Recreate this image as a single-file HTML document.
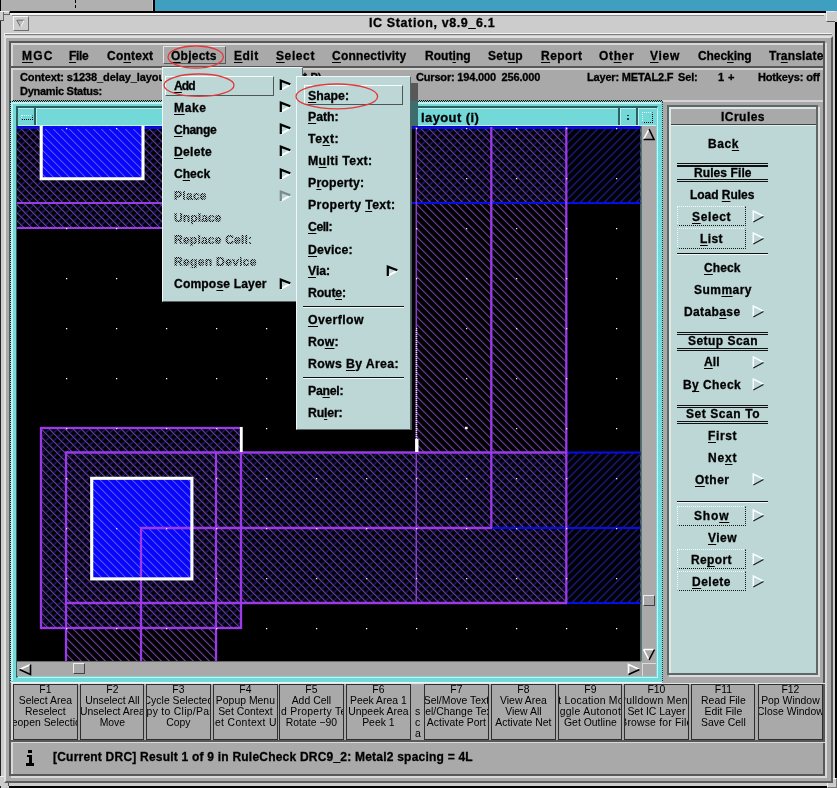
<!DOCTYPE html>
<html><head><meta charset="utf-8"><title>IC Station</title><style>
html,body{margin:0;padding:0;overflow:hidden}
html{width:837px;height:788px}
body{width:837px;height:788px;position:relative;overflow:hidden;background:#cccccc;font-family:"Liberation Sans",sans-serif;}
body div, body span.t{position:absolute;}
span.t{white-space:pre;line-height:1;display:block;will-change:transform}
span.t u{text-decoration:underline;text-underline-offset:1.5px;text-decoration-thickness:1px}
div.fkw{position:absolute;left:-40px;right:-40px;top:-1.6px;text-align:center;will-change:transform}
div.fk{position:static;font-size:10.4px;line-height:11.05px;white-space:pre;letter-spacing:0.02px;color:#000}
</style></head>
<body>
<div style="left:0px;top:0px;width:837px;height:11px;background:#3f9fc1;"></div>
<div style="left:0px;top:0px;width:152px;height:10.5px;background:#b0b0b0;"></div>
<div style="left:152px;top:0px;width:1.2px;height:10.5px;background:#c8c8c8;"></div>
<div style="left:153.2px;top:0px;width:1.8px;height:11px;background:#000;"></div>
<div style="left:0px;top:0px;width:1px;height:11px;background:#000;"></div>
<div style="left:75px;top:0px;width:1.3px;height:2.5px;background:#000;"></div>
<div style="left:75px;top:5px;width:1.3px;height:3px;background:#000;"></div>
<div style="left:0px;top:11px;width:835px;height:775px;background:#cccccc;"></div>
<div style="left:0px;top:11px;width:1px;height:777px;background:#222;"></div>
<div style="left:9.5px;top:10.7px;width:817px;height:2.3px;background:#000;"></div>
<div style="left:10px;top:13px;width:815px;height:1.8px;background:#f4f4f4;"></div>
<div style="left:0px;top:11px;width:9.7px;height:3.6px;background:#cccccc;border-right:1px solid #555;border-bottom:1px solid #666;border-top:1px solid #f0f0f0;box-sizing:border-box;"></div>
<div style="left:0px;top:11px;width:3.6px;height:10.4px;background:#cccccc;border-right:1px solid #666;border-bottom:1px solid #555;box-sizing:border-box;"></div>
<div style="left:0px;top:11px;width:3.6px;height:1px;background:#f0f0f0;"></div>
<div style="left:12px;top:15px;width:812px;height:0.9px;background:#8c8c8c;"></div>
<div style="left:826px;top:11px;width:9px;height:10.5px;background:#cccccc;border-left:1px solid #eee;border-bottom:1px solid #555;border-top:1px solid #cfeefa;box-sizing:border-box;"></div>
<div style="left:835px;top:21.5px;width:2px;height:766.5px;background:#000;"></div>
<div style="left:9px;top:785.8px;width:828px;height:2.2px;background:#000;"></div>
<div style="left:826.5px;top:777.5px;width:10.5px;height:10.5px;background:#cccccc;border-left:1px solid #f4f4f4;border-top:1px solid #f4f4f4;border-right:1.5px solid #777;border-bottom:1.5px solid #777;box-sizing:border-box;"></div>
<div style="left:0px;top:776px;width:9px;height:10px;background:#cccccc;border-right:1px solid #555;border-top:1px solid #eee;box-sizing:border-box;"></div>
<div style="left:4px;top:33.3px;width:828px;height:1px;background:#f4f4f4;"></div>
<div style="left:5px;top:34.3px;width:827px;height:1px;background:#7c7c7c;"></div>
<div style="left:4px;top:33.3px;width:1px;height:750px;background:#f0f0f0;"></div>
<div style="left:12.9px;top:16px;width:15.8px;height:14.7px;background:#cccccc;box-sizing:border-box;border-top:1.2px solid #f6f6f6;border-left:1.2px solid #f6f6f6;border-bottom:1px solid #6e6e6e;border-right:1px solid #6e6e6e;"><svg width="14" height="13" style="position:absolute;left:0;top:0" viewBox="0 0 14 13"><path d="M2.8 3.2 L10.2 3.2 L6.4 9.6 Z" fill="#bcbcbc" stroke="#6a6a6a" stroke-width="1"/><path d="M10.2 3.4 L6.6 9.6" stroke="#f6f6f6" stroke-width="1.1"/></svg></div>
<span class="t" style="left:368.60px;top:16.77px;font-size:12.5px;font-weight:bold;color:#000;-webkit-text-stroke:0.3px #000;letter-spacing:0.614px;">IC Station, v8.9_6.1</span>
<div style="left:4px;top:35.8px;width:828.5px;height:747.7px;background:#a9a9a9;box-sizing:border-box;border-top:2.4px solid #e0e0e0;border-left:2px solid #e0e0e0;border-bottom:2.5px solid #5c5c5c;border-right:2.5px solid #5c5c5c;"></div>
<div style="left:11.1px;top:42.9px;width:816.1px;height:735.1px;box-sizing:border-box;border:2px solid #d8d8d8;"></div>
<div style="left:8.9px;top:40.7px;width:816.1px;height:735.1px;box-sizing:border-box;border:2.2px solid #585858;"></div>
<div style="left:13.2px;top:44.9px;width:809.5px;height:21.4px;background:#a9a9a9;"></div>
<div style="left:11.1px;top:66.3px;width:813.9px;height:2px;background:#585858;"></div>
<div style="left:163px;top:46.4px;width:62.7px;height:18px;background:#a9a9a9;box-sizing:border-box;border-top:1.5px solid #e4e4e4;border-left:1.5px solid #e4e4e4;border-bottom:1.5px solid #5a5a5a;border-right:1.5px solid #5a5a5a;"></div>
<span class="t" style="left:21.80px;top:50.42px;font-size:12px;font-weight:bold;color:#000;-webkit-text-stroke:0.3px #000;letter-spacing:1.150px;"><u>M</u>GC</span>
<span class="t" style="left:68.70px;top:50.42px;font-size:12px;font-weight:bold;color:#000;-webkit-text-stroke:0.3px #000;letter-spacing:-0.296px;"><u>F</u>ile</span>
<span class="t" style="left:107.10px;top:50.42px;font-size:12px;font-weight:bold;color:#000;-webkit-text-stroke:0.3px #000;letter-spacing:0.235px;">Co<u>n</u>text</span>
<span class="t" style="left:171.40px;top:50.42px;font-size:12px;font-weight:bold;color:#000;-webkit-text-stroke:0.3px #000;letter-spacing:0.245px;"><u>O</u>bjects</span>
<span class="t" style="left:234.20px;top:50.42px;font-size:12px;font-weight:bold;color:#000;-webkit-text-stroke:0.3px #000;letter-spacing:0.504px;"><u>E</u>dit</span>
<span class="t" style="left:275.70px;top:50.42px;font-size:12px;font-weight:bold;color:#000;-webkit-text-stroke:0.3px #000;letter-spacing:0.605px;"><u>S</u>elect</span>
<span class="t" style="left:332.20px;top:50.42px;font-size:12px;font-weight:bold;color:#000;-webkit-text-stroke:0.3px #000;letter-spacing:0.197px;"><u>C</u>onnectivity</span>
<span class="t" style="left:424.70px;top:50.42px;font-size:12px;font-weight:bold;color:#000;-webkit-text-stroke:0.3px #000;letter-spacing:0.043px;">Rout<u>i</u>ng</span>
<span class="t" style="left:488.00px;top:50.42px;font-size:12px;font-weight:bold;color:#000;-webkit-text-stroke:0.3px #000;letter-spacing:0.331px;">Set<u>u</u>p</span>
<span class="t" style="left:540.60px;top:50.42px;font-size:12px;font-weight:bold;color:#000;-webkit-text-stroke:0.3px #000;letter-spacing:0.446px;"><u>R</u>eport</span>
<span class="t" style="left:598.90px;top:50.42px;font-size:12px;font-weight:bold;color:#000;-webkit-text-stroke:0.3px #000;letter-spacing:0.642px;">Ot<u>h</u>er</span>
<span class="t" style="left:650.20px;top:50.42px;font-size:12px;font-weight:bold;color:#000;-webkit-text-stroke:0.3px #000;letter-spacing:0.720px;"><u>V</u>iew</span>
<span class="t" style="left:697.80px;top:50.42px;font-size:12px;font-weight:bold;color:#000;-webkit-text-stroke:0.3px #000;letter-spacing:-0.076px;">Chec<u>k</u>ing</span>
<span class="t" style="left:769.20px;top:50.42px;font-size:12px;font-weight:bold;color:#000;-webkit-text-stroke:0.3px #000;letter-spacing:0.210px;">Tr<u>a</u>nslate</span>
<div style="left:13.2px;top:68.3px;width:809.5px;height:32px;background:#a9a9a9;"></div>
<div style="left:13.2px;top:68.3px;width:809.5px;height:1.3px;background:#d2d2d2;"></div>
<span class="t" style="left:20.00px;top:71.51px;font-size:11px;font-weight:bold;color:#000;-webkit-text-stroke:0.3px #000;letter-spacing:-0.089px;">Context: s1238_delay_layout</span>
<span class="t" style="left:20.00px;top:86.21px;font-size:11px;font-weight:bold;color:#000;-webkit-text-stroke:0.3px #000;letter-spacing:-0.286px;">Dynamic Status:</span>
<span class="t" style="left:299.20px;top:71.51px;font-size:11px;font-weight:bold;color:#000;-webkit-text-stroke:0.3px #000;letter-spacing:0.125px;">(* P)</span>
<span class="t" style="left:416.20px;top:71.61px;font-size:11px;font-weight:bold;color:#000;-webkit-text-stroke:0.3px #000;letter-spacing:-0.179px;">Cursor: 194.000  256.000</span>
<span class="t" style="left:587.20px;top:71.61px;font-size:11px;font-weight:bold;color:#000;-webkit-text-stroke:0.3px #000;letter-spacing:-0.181px;">Layer: METAL2.F</span>
<span class="t" style="left:678.00px;top:71.61px;font-size:11px;font-weight:bold;color:#000;-webkit-text-stroke:0.3px #000;letter-spacing:-0.162px;">Sel:</span>
<span class="t" style="left:718.20px;top:71.61px;font-size:11px;font-weight:bold;color:#000;-webkit-text-stroke:0.3px #000;letter-spacing:0.445px;">1 +</span>
<span class="t" style="left:758.20px;top:71.61px;font-size:11px;font-weight:bold;color:#000;-webkit-text-stroke:0.3px #000;letter-spacing:-0.151px;">Hotkeys: off</span>
<div style="left:13.2px;top:100px;width:649px;height:1px;border-top:1px dotted #000;"></div>
<div style="left:662px;top:100px;width:160.7px;height:2px;background:#d4d4d4;"></div>
<div style="left:9.5px;top:100.5px;width:653px;height:582px;background:#72d8d8;box-sizing:border-box;border-top:1.5px dotted #222;border-left:1.5px dotted #222;border-right:1.5px dotted #333;border-bottom:1.5px solid #e8f8f8;"></div>
<div style="left:11px;top:102px;width:650px;height:1.6px;background:#c4f0f0;"></div>
<div style="left:11px;top:102px;width:1.8px;height:579px;background:#c4f0f0;"></div>
<div style="left:15.5px;top:106px;width:642.5px;height:571.5px;background:#72d8d8;box-sizing:border-box;border-top:2px solid #2f6060;border-left:2px solid #2f6060;border-bottom:1.5px solid #c8f2f2;border-right:1.5px solid #c8f2f2;"></div>
<div style="left:17.5px;top:108px;width:638px;height:1.3px;background:#b8eeee;"></div>
<div style="left:34.4px;top:108px;width:1.6px;height:17px;background:#2f6060;"></div>
<div style="left:36px;top:109px;width:1.2px;height:16px;background:#b8eeee;"></div>
<div style="left:618px;top:108px;width:1.6px;height:17px;background:#2f6060;"></div>
<div style="left:619.6px;top:109px;width:1.2px;height:16px;background:#b8eeee;"></div>
<div style="left:636.3px;top:108px;width:1.6px;height:17px;background:#2f6060;"></div>
<div style="left:637.9px;top:109px;width:1.2px;height:16px;background:#b8eeee;"></div>
<div style="left:17.5px;top:124.7px;width:638px;height:1.3px;background:#c4f0f0;"></div>
<div style="left:21px;top:115px;width:11.5px;height:5px;box-sizing:border-box;border-top:1px dotted #f4ffff;border-left:1px dotted #f4ffff;border-bottom:1px dotted #000;border-right:1px dotted #000;"></div>
<div style="left:627px;top:114.6px;width:1.5px;height:1.5px;background:#1a3a3a;"></div>
<div style="left:627px;top:118.2px;width:1.5px;height:1.5px;background:#1a3a3a;"></div>
<div style="left:641.5px;top:112px;width:11.5px;height:10.5px;box-sizing:border-box;border-top:1.5px dotted #f4ffff;border-left:1.5px dotted #f4ffff;border-bottom:1.5px dotted #000;border-right:1.5px dotted #000;"></div>
<span class="t" style="left:420.90px;top:110.63px;font-size:13px;font-weight:bold;color:#000;-webkit-text-stroke:0.3px #000;letter-spacing:0.403px;">layout (i)</span>
<div style="left:640.5px;top:126px;width:15px;height:550px;background:#a9a9a9;"></div>
<div style="left:17px;top:661px;width:638.5px;height:15px;background:#a9a9a9;"></div>
<div style="left:640.5px;top:126px;width:1.3px;height:535px;background:#6a6a6a;"></div>
<div style="left:17px;top:661px;width:623.5px;height:1.3px;background:#6a6a6a;"></div>
<svg width="623.5" height="535" viewBox="17 126 623.5 535" style="position:absolute;left:17px;top:126px;display:block" shape-rendering="auto"><defs><pattern id="hp" x="4.3" y="0" width="8" height="8" patternUnits="userSpaceOnUse"><path d="M-2 -2 L10 10 M-2 6 L2 10 M6 -2 L10 2" stroke="#1a0a2c" stroke-width="2" fill="none"/><path d="M-2 -2 L10 10 M-2 6 L2 10 M6 -2 L10 2" stroke="#9868d0" stroke-width="0.8" fill="none"/></pattern><pattern id="hb" x="6.6" y="0" width="8" height="8" patternUnits="userSpaceOnUse"><path d="M-2 10 L10 -2 M-2 2 L2 -2 M6 10 L10 6" stroke="#07072c" stroke-width="2.4" fill="none"/><path d="M-2 10 L10 -2 M-2 2 L2 -2 M6 10 L10 6" stroke="#2828b4" stroke-width="0.85" fill="none"/></pattern><pattern id="hl" x="4.3" y="0" width="8" height="8" patternUnits="userSpaceOnUse"><path d="M-1 -1 L9 9 M-1 7 L1 9 M7 -1 L9 1" stroke="#8670ff" stroke-width="0.95" fill="none"/></pattern></defs><rect x="17" y="126" width="623.5" height="535" fill="#000"/><rect x="17" y="127" width="283" height="101" fill="url(#hb)"/><rect x="416" y="127" width="224.5" height="76" fill="url(#hb)"/><rect x="41" y="428" width="200" height="200" fill="url(#hb)"/><rect x="66" y="452" width="574.5" height="151" fill="url(#hb)"/><rect x="41" y="126" width="102" height="53" fill="#0808f8"/><rect x="91" y="478" width="101" height="101" fill="#0808f8"/><rect x="41" y="126" width="102" height="53" fill="url(#hl)"/><rect x="91" y="478" width="101" height="101" fill="url(#hl)"/><rect x="17" y="127" width="283" height="101" fill="url(#hp)"/><rect x="416" y="127" width="150" height="325" fill="url(#hp)"/><rect x="41" y="428" width="200" height="200" fill="url(#hp)"/><rect x="66" y="452" width="500" height="151" fill="url(#hp)"/><rect x="66" y="603" width="150" height="58" fill="url(#hp)"/><rect x="42" y="126" width="100" height="52" fill="#0808f8"/><rect x="92" y="479" width="99" height="99" fill="#0808f8"/><rect x="42" y="126" width="100" height="52" fill="url(#hl)"/><rect x="92" y="479" width="99" height="99" fill="url(#hl)"/><line x1="17" y1="127.6" x2="640.5" y2="127.6" stroke="#0a0af0" stroke-width="2.8"/><line x1="411" y1="203" x2="640.5" y2="203" stroke="#0a0af0" stroke-width="2"/><line x1="566" y1="452.5" x2="640.5" y2="452.5" stroke="#0a0af0" stroke-width="2"/><line x1="491" y1="528" x2="640.5" y2="528" stroke="#0a0af0" stroke-width="2"/><line x1="566" y1="603" x2="640.5" y2="603" stroke="#0a0af0" stroke-width="2"/><line x1="17" y1="203" x2="300" y2="203" stroke="#9c3aea" stroke-width="2.2"/><line x1="17" y1="228" x2="300" y2="228" stroke="#9c3aea" stroke-width="2.2"/><line x1="416.3" y1="127" x2="416.3" y2="603" stroke="#8a3cd0" stroke-width="1.5"/><line x1="491.3" y1="127" x2="491.3" y2="528" stroke="#9c3aea" stroke-width="2.3"/><line x1="566.3" y1="127" x2="566.3" y2="603" stroke="#9c3aea" stroke-width="2.3"/><rect x="41" y="428" width="200" height="200" fill="none" stroke="#9c3aea" stroke-width="2.3"/><line x1="66" y1="452" x2="66" y2="661" stroke="#9c3aea" stroke-width="2.3"/><line x1="65" y1="452.5" x2="567" y2="452.5" stroke="#9c3aea" stroke-width="2.3"/><line x1="65" y1="603" x2="567" y2="603" stroke="#9c3aea" stroke-width="2.3"/><line x1="216" y1="452" x2="216" y2="661" stroke="#9c3aea" stroke-width="2.3"/><line x1="141" y1="528" x2="141" y2="661" stroke="#9c3aea" stroke-width="2.3"/><line x1="140" y1="528" x2="492" y2="528" stroke="#9c3aea" stroke-width="2.3"/><path d="M41.2 126 V178.7 H143 V126" fill="none" stroke="#fff" stroke-width="3.1"/><rect x="91.7" y="478.3" width="100.2" height="100.6" fill="none" stroke="#fff" stroke-width="3.1"/><line x1="241.3" y1="427" x2="241.3" y2="452" stroke="#fff" stroke-width="2.8"/><line x1="416.8" y1="439" x2="416.8" y2="452" stroke="#fff" stroke-width="3.4"/><line x1="416.5" y1="330" x2="416.5" y2="439" stroke="#e8e0f8" stroke-width="1.6" stroke-dasharray="1 1"/><rect x="66" y="128" width="1.25" height="1.25" fill="#fff"/><rect x="66" y="178" width="1.25" height="1.25" fill="#fff"/><rect x="66" y="228" width="1.25" height="1.25" fill="#fff"/><rect x="66" y="278" width="1.25" height="1.25" fill="#fff"/><rect x="66" y="328" width="1.25" height="1.25" fill="#fff"/><rect x="66" y="378" width="1.25" height="1.25" fill="#fff"/><rect x="66" y="428" width="1.25" height="1.25" fill="#fff"/><rect x="66" y="478" width="1.25" height="1.25" fill="#fff"/><rect x="66" y="528" width="1.25" height="1.25" fill="#fff"/><rect x="66" y="578" width="1.25" height="1.25" fill="#fff"/><rect x="66" y="628" width="1.25" height="1.25" fill="#fff"/><rect x="116" y="128" width="1.25" height="1.25" fill="#fff"/><rect x="116" y="178" width="1.25" height="1.25" fill="#fff"/><rect x="116" y="228" width="1.25" height="1.25" fill="#fff"/><rect x="116" y="278" width="1.25" height="1.25" fill="#fff"/><rect x="116" y="328" width="1.25" height="1.25" fill="#fff"/><rect x="116" y="378" width="1.25" height="1.25" fill="#fff"/><rect x="116" y="428" width="1.25" height="1.25" fill="#fff"/><rect x="116" y="478" width="1.25" height="1.25" fill="#fff"/><rect x="116" y="528" width="1.25" height="1.25" fill="#fff"/><rect x="116" y="578" width="1.25" height="1.25" fill="#fff"/><rect x="116" y="628" width="1.25" height="1.25" fill="#fff"/><rect x="166" y="128" width="1.25" height="1.25" fill="#fff"/><rect x="166" y="178" width="1.25" height="1.25" fill="#fff"/><rect x="166" y="228" width="1.25" height="1.25" fill="#fff"/><rect x="166" y="278" width="1.25" height="1.25" fill="#fff"/><rect x="166" y="328" width="1.25" height="1.25" fill="#fff"/><rect x="166" y="378" width="1.25" height="1.25" fill="#fff"/><rect x="166" y="428" width="1.25" height="1.25" fill="#fff"/><rect x="166" y="478" width="1.25" height="1.25" fill="#fff"/><rect x="166" y="528" width="1.25" height="1.25" fill="#fff"/><rect x="166" y="578" width="1.25" height="1.25" fill="#fff"/><rect x="166" y="628" width="1.25" height="1.25" fill="#fff"/><rect x="216" y="128" width="1.25" height="1.25" fill="#fff"/><rect x="216" y="178" width="1.25" height="1.25" fill="#fff"/><rect x="216" y="228" width="1.25" height="1.25" fill="#fff"/><rect x="216" y="278" width="1.25" height="1.25" fill="#fff"/><rect x="216" y="328" width="1.25" height="1.25" fill="#fff"/><rect x="216" y="378" width="1.25" height="1.25" fill="#fff"/><rect x="216" y="428" width="1.25" height="1.25" fill="#fff"/><rect x="216" y="478" width="1.25" height="1.25" fill="#fff"/><rect x="216" y="528" width="1.25" height="1.25" fill="#fff"/><rect x="216" y="578" width="1.25" height="1.25" fill="#fff"/><rect x="216" y="628" width="1.25" height="1.25" fill="#fff"/><rect x="266" y="128" width="1.25" height="1.25" fill="#fff"/><rect x="266" y="178" width="1.25" height="1.25" fill="#fff"/><rect x="266" y="228" width="1.25" height="1.25" fill="#fff"/><rect x="266" y="278" width="1.25" height="1.25" fill="#fff"/><rect x="266" y="328" width="1.25" height="1.25" fill="#fff"/><rect x="266" y="378" width="1.25" height="1.25" fill="#fff"/><rect x="266" y="428" width="1.25" height="1.25" fill="#fff"/><rect x="266" y="478" width="1.25" height="1.25" fill="#fff"/><rect x="266" y="528" width="1.25" height="1.25" fill="#fff"/><rect x="266" y="578" width="1.25" height="1.25" fill="#fff"/><rect x="266" y="628" width="1.25" height="1.25" fill="#fff"/><rect x="316" y="128" width="1.25" height="1.25" fill="#fff"/><rect x="316" y="178" width="1.25" height="1.25" fill="#fff"/><rect x="316" y="228" width="1.25" height="1.25" fill="#fff"/><rect x="316" y="278" width="1.25" height="1.25" fill="#fff"/><rect x="316" y="328" width="1.25" height="1.25" fill="#fff"/><rect x="316" y="378" width="1.25" height="1.25" fill="#fff"/><rect x="316" y="428" width="1.25" height="1.25" fill="#fff"/><rect x="316" y="478" width="1.25" height="1.25" fill="#fff"/><rect x="316" y="528" width="1.25" height="1.25" fill="#fff"/><rect x="316" y="578" width="1.25" height="1.25" fill="#fff"/><rect x="316" y="628" width="1.25" height="1.25" fill="#fff"/><rect x="366" y="128" width="1.25" height="1.25" fill="#fff"/><rect x="366" y="178" width="1.25" height="1.25" fill="#fff"/><rect x="366" y="228" width="1.25" height="1.25" fill="#fff"/><rect x="366" y="278" width="1.25" height="1.25" fill="#fff"/><rect x="366" y="328" width="1.25" height="1.25" fill="#fff"/><rect x="366" y="378" width="1.25" height="1.25" fill="#fff"/><rect x="366" y="428" width="1.25" height="1.25" fill="#fff"/><rect x="366" y="478" width="1.25" height="1.25" fill="#fff"/><rect x="366" y="528" width="1.25" height="1.25" fill="#fff"/><rect x="366" y="578" width="1.25" height="1.25" fill="#fff"/><rect x="366" y="628" width="1.25" height="1.25" fill="#fff"/><rect x="416" y="128" width="1.25" height="1.25" fill="#fff"/><rect x="416" y="178" width="1.25" height="1.25" fill="#fff"/><rect x="416" y="228" width="1.25" height="1.25" fill="#fff"/><rect x="416" y="278" width="1.25" height="1.25" fill="#fff"/><rect x="416" y="328" width="1.25" height="1.25" fill="#fff"/><rect x="416" y="378" width="1.25" height="1.25" fill="#fff"/><rect x="416" y="428" width="1.25" height="1.25" fill="#fff"/><rect x="416" y="478" width="1.25" height="1.25" fill="#fff"/><rect x="416" y="528" width="1.25" height="1.25" fill="#fff"/><rect x="416" y="578" width="1.25" height="1.25" fill="#fff"/><rect x="416" y="628" width="1.25" height="1.25" fill="#fff"/><rect x="466" y="128" width="1.25" height="1.25" fill="#fff"/><rect x="466" y="178" width="1.25" height="1.25" fill="#fff"/><rect x="466" y="228" width="1.25" height="1.25" fill="#fff"/><rect x="466" y="278" width="1.25" height="1.25" fill="#fff"/><rect x="466" y="328" width="1.25" height="1.25" fill="#fff"/><rect x="466" y="378" width="1.25" height="1.25" fill="#fff"/><rect x="466" y="428" width="1.25" height="1.25" fill="#fff"/><rect x="466" y="478" width="1.25" height="1.25" fill="#fff"/><rect x="466" y="528" width="1.25" height="1.25" fill="#fff"/><rect x="466" y="578" width="1.25" height="1.25" fill="#fff"/><rect x="466" y="628" width="1.25" height="1.25" fill="#fff"/><rect x="516" y="128" width="1.25" height="1.25" fill="#fff"/><rect x="516" y="178" width="1.25" height="1.25" fill="#fff"/><rect x="516" y="228" width="1.25" height="1.25" fill="#fff"/><rect x="516" y="278" width="1.25" height="1.25" fill="#fff"/><rect x="516" y="328" width="1.25" height="1.25" fill="#fff"/><rect x="516" y="378" width="1.25" height="1.25" fill="#fff"/><rect x="516" y="428" width="1.25" height="1.25" fill="#fff"/><rect x="516" y="478" width="1.25" height="1.25" fill="#fff"/><rect x="516" y="528" width="1.25" height="1.25" fill="#fff"/><rect x="516" y="578" width="1.25" height="1.25" fill="#fff"/><rect x="516" y="628" width="1.25" height="1.25" fill="#fff"/><rect x="566" y="128" width="1.25" height="1.25" fill="#fff"/><rect x="566" y="178" width="1.25" height="1.25" fill="#fff"/><rect x="566" y="228" width="1.25" height="1.25" fill="#fff"/><rect x="566" y="278" width="1.25" height="1.25" fill="#fff"/><rect x="566" y="328" width="1.25" height="1.25" fill="#fff"/><rect x="566" y="378" width="1.25" height="1.25" fill="#fff"/><rect x="566" y="428" width="1.25" height="1.25" fill="#fff"/><rect x="566" y="478" width="1.25" height="1.25" fill="#fff"/><rect x="566" y="528" width="1.25" height="1.25" fill="#fff"/><rect x="566" y="578" width="1.25" height="1.25" fill="#fff"/><rect x="566" y="628" width="1.25" height="1.25" fill="#fff"/><rect x="616" y="128" width="1.25" height="1.25" fill="#fff"/><rect x="616" y="178" width="1.25" height="1.25" fill="#fff"/><rect x="616" y="228" width="1.25" height="1.25" fill="#fff"/><rect x="616" y="278" width="1.25" height="1.25" fill="#fff"/><rect x="616" y="328" width="1.25" height="1.25" fill="#fff"/><rect x="616" y="378" width="1.25" height="1.25" fill="#fff"/><rect x="616" y="428" width="1.25" height="1.25" fill="#fff"/><rect x="616" y="478" width="1.25" height="1.25" fill="#fff"/><rect x="616" y="528" width="1.25" height="1.25" fill="#fff"/><rect x="616" y="578" width="1.25" height="1.25" fill="#fff"/><rect x="616" y="628" width="1.25" height="1.25" fill="#fff"/><rect x="465" y="426.8" width="2.6" height="2.2" fill="#fff"/></svg>
<svg width="14" height="13" viewBox="0 0 14 13" style="position:absolute;left:641.5px;top:127.5px"><path d="M7 1 L1.5 11.5" stroke="#fff" stroke-width="1.6" fill="none"/><path d="M7 1 L12 11.5 L1.5 11.5" stroke="#000" stroke-width="1.6" fill="none"/></svg>
<svg width="14" height="13" viewBox="0 0 14 13" style="position:absolute;left:641.5px;top:647.5px"><path d="M1.5 1.5 L12.5 1.5 M1.5 1.5 L7 12" stroke="#fff" stroke-width="1.6" fill="none"/><path d="M12.5 1.5 L7 12" stroke="#000" stroke-width="1.6" fill="none"/></svg>
<div style="left:642.5px;top:594.5px;width:12px;height:11px;background:#a9a9a9;box-sizing:border-box;border-top:1.5px solid #eee;border-left:1.5px solid #eee;border-bottom:1.5px solid #444;border-right:1.5px solid #444;"></div>
<svg width="14" height="13" viewBox="0 0 14 13" style="position:absolute;left:18px;top:662.5px"><path d="M12.5 1.5 L1.5 6.5" stroke="#fff" stroke-width="1.6" fill="none"/><path d="M12.5 1.5 L12.5 11.5 L1.5 6.5" stroke="#000" stroke-width="1.6" fill="none"/></svg>
<svg width="14" height="13" viewBox="0 0 14 13" style="position:absolute;left:626.5px;top:662.5px"><path d="M1.5 11.5 L1.5 1.5 L12.5 6.5" stroke="#fff" stroke-width="1.6" fill="none"/><path d="M1.5 11.5 L12.5 6.5" stroke="#000" stroke-width="1.6" fill="none"/></svg>
<div style="left:73.3px;top:663.3px;width:11.5px;height:11px;background:#a9a9a9;box-sizing:border-box;border-top:1.5px solid #eee;border-left:1.5px solid #eee;border-bottom:1.5px solid #444;border-right:1.5px solid #444;"></div>
<div style="left:641.5px;top:662.5px;width:14px;height:13.5px;background:#a9a9a9;box-sizing:border-box;border-top:1px solid #ddd;border-left:1px solid #ddd;"></div>
<div style="left:669px;top:107px;width:151px;height:570px;box-sizing:border-box;border:2px solid #dcdcdc;"></div>
<div style="left:667px;top:105px;width:151px;height:570px;background:#bdd6d6;box-sizing:border-box;border:2px solid #5e6666;"></div>
<div style="left:669px;top:107px;width:147px;height:1.6px;background:#dde6e6;"></div>
<div style="left:669px;top:107px;width:1.8px;height:566px;background:#dde8e8;"></div>
<div style="left:670.8px;top:108.6px;width:145.2px;height:15.6px;background:#a9a9a9;"></div>
<div style="left:670.8px;top:124.2px;width:145.2px;height:1px;background:#3c4444;"></div>
<div style="left:670.8px;top:125.2px;width:145.2px;height:1px;background:#e4f0f0;"></div>
<span class="t" style="left:721.20px;top:110.72px;font-size:12px;font-weight:bold;color:#000;-webkit-text-stroke:0.3px #000;letter-spacing:0.469px;">ICrules</span>
<span class="t" style="left:708.15px;top:138.32px;font-size:12px;font-weight:bold;color:#000;-webkit-text-stroke:0.3px #000;letter-spacing:0.599px;">Bac<u>k</u></span>
<div style="left:677.4px;top:163.1px;width:90.5px;height:1.2px;background:#111;"></div>
<div style="left:677.4px;top:165.4px;width:90.5px;height:1.2px;background:#111;"></div>
<span class="t" style="left:693.75px;top:166.82px;font-size:12px;font-weight:bold;color:#000;-webkit-text-stroke:0.3px #000;letter-spacing:0.090px;">Rules File</span>
<div style="left:677.4px;top:178.9px;width:90.5px;height:1.2px;background:#111;"></div>
<div style="left:677.4px;top:181.20000000000002px;width:90.5px;height:1.2px;background:#111;"></div>
<span class="t" style="left:690.05px;top:189.12px;font-size:12px;font-weight:bold;color:#000;-webkit-text-stroke:0.3px #000;letter-spacing:-0.043px;">Load <u>R</u>ules</span>
<div style="left:677.4px;top:206px;width:68.2px;height:20px;box-sizing:border-box;border-top:1px dotted #f0ffff;border-left:1px dotted #f0ffff;border-bottom:1px dotted #101818;border-right:1px dotted #101818;"></div>
<span class="t" style="left:692.25px;top:210.62px;font-size:12px;font-weight:bold;color:#000;-webkit-text-stroke:0.3px #000;letter-spacing:0.625px;"><u>S</u>elect</span>
<svg width="13" height="13" viewBox="0 0 13 13" style="position:absolute;left:751.5px;top:210.0px"><path d="M1.3 12 L1.3 1 L11.5 6.2" stroke="#f8ffff" stroke-width="1.5" fill="none"/><path d="M1.3 12 L11.5 6.5" stroke="#1a1a1a" stroke-width="1.3" fill="none"/></svg>
<div style="left:677.4px;top:228.2px;width:68.2px;height:20.80000000000001px;box-sizing:border-box;border-top:1px dotted #f0ffff;border-left:1px dotted #f0ffff;border-bottom:1px dotted #101818;border-right:1px dotted #101818;"></div>
<span class="t" style="left:700.25px;top:232.82px;font-size:12px;font-weight:bold;color:#000;-webkit-text-stroke:0.3px #000;letter-spacing:0.380px;"><u>L</u>ist</span>
<svg width="13" height="13" viewBox="0 0 13 13" style="position:absolute;left:751.5px;top:232.2px"><path d="M1.3 12 L1.3 1 L11.5 6.2" stroke="#f8ffff" stroke-width="1.5" fill="none"/><path d="M1.3 12 L11.5 6.5" stroke="#1a1a1a" stroke-width="1.3" fill="none"/></svg>
<div style="left:677.4px;top:252.5px;width:90.5px;height:1.2px;background:#111;"></div>
<div style="left:677.4px;top:253.7px;width:90.5px;height:1px;background:#eef6f6;"></div>
<span class="t" style="left:704.25px;top:262.02px;font-size:12px;font-weight:bold;color:#000;-webkit-text-stroke:0.3px #000;letter-spacing:0.117px;"><u>C</u>heck</span>
<span class="t" style="left:693.75px;top:283.62px;font-size:12px;font-weight:bold;color:#000;-webkit-text-stroke:0.3px #000;letter-spacing:0.464px;">Sum<u>m</u>ary</span>
<span class="t" style="left:683.65px;top:305.82px;font-size:12px;font-weight:bold;color:#000;-webkit-text-stroke:0.3px #000;letter-spacing:0.387px;">Datab<u>a</u>se</span>
<svg width="13" height="13" viewBox="0 0 13 13" style="position:absolute;left:751.5px;top:305.2px"><path d="M1.3 12 L1.3 1 L11.5 6.2" stroke="#f8ffff" stroke-width="1.5" fill="none"/><path d="M1.3 12 L11.5 6.5" stroke="#1a1a1a" stroke-width="1.3" fill="none"/></svg>
<div style="left:677.4px;top:331.5px;width:90.5px;height:1.2px;background:#111;"></div>
<div style="left:677.4px;top:333.8px;width:90.5px;height:1.2px;background:#111;"></div>
<span class="t" style="left:687.75px;top:334.72px;font-size:12px;font-weight:bold;color:#000;-webkit-text-stroke:0.3px #000;letter-spacing:0.460px;">Setup Scan</span>
<div style="left:677.4px;top:347.5px;width:90.5px;height:1.2px;background:#111;"></div>
<div style="left:677.4px;top:349.8px;width:90.5px;height:1.2px;background:#111;"></div>
<span class="t" style="left:703.65px;top:356.32px;font-size:12px;font-weight:bold;color:#000;-webkit-text-stroke:0.3px #000;letter-spacing:0.078px;"><u>A</u>ll</span>
<svg width="13" height="13" viewBox="0 0 13 13" style="position:absolute;left:751.5px;top:355.7px"><path d="M1.3 12 L1.3 1 L11.5 6.2" stroke="#f8ffff" stroke-width="1.5" fill="none"/><path d="M1.3 12 L11.5 6.5" stroke="#1a1a1a" stroke-width="1.3" fill="none"/></svg>
<span class="t" style="left:683.05px;top:378.52px;font-size:12px;font-weight:bold;color:#000;-webkit-text-stroke:0.3px #000;letter-spacing:0.426px;">B<u>y</u> Check</span>
<svg width="13" height="13" viewBox="0 0 13 13" style="position:absolute;left:751.5px;top:377.9px"><path d="M1.3 12 L1.3 1 L11.5 6.2" stroke="#f8ffff" stroke-width="1.5" fill="none"/><path d="M1.3 12 L11.5 6.5" stroke="#1a1a1a" stroke-width="1.3" fill="none"/></svg>
<div style="left:677.4px;top:404.7px;width:90.5px;height:1.2px;background:#111;"></div>
<div style="left:677.4px;top:407.0px;width:90.5px;height:1.2px;background:#111;"></div>
<span class="t" style="left:686.25px;top:407.72px;font-size:12px;font-weight:bold;color:#000;-webkit-text-stroke:0.3px #000;letter-spacing:0.570px;">Set Scan To</span>
<div style="left:677.4px;top:420.5px;width:90.5px;height:1.2px;background:#111;"></div>
<div style="left:677.4px;top:422.8px;width:90.5px;height:1.2px;background:#111;"></div>
<span class="t" style="left:708.25px;top:429.92px;font-size:12px;font-weight:bold;color:#000;-webkit-text-stroke:0.3px #000;letter-spacing:0.617px;"><u>F</u>irst</span>
<span class="t" style="left:708.25px;top:451.52px;font-size:12px;font-weight:bold;color:#000;-webkit-text-stroke:0.3px #000;letter-spacing:0.823px;">Ne<u>x</u>t</span>
<span class="t" style="left:694.70px;top:473.72px;font-size:12px;font-weight:bold;color:#000;-webkit-text-stroke:0.3px #000;letter-spacing:0.496px;"><u>O</u>ther</span>
<svg width="13" height="13" viewBox="0 0 13 13" style="position:absolute;left:751.5px;top:473.1px"><path d="M1.3 12 L1.3 1 L11.5 6.2" stroke="#f8ffff" stroke-width="1.5" fill="none"/><path d="M1.3 12 L11.5 6.5" stroke="#1a1a1a" stroke-width="1.3" fill="none"/></svg>
<div style="left:677.4px;top:501.0px;width:90.5px;height:1.2px;background:#111;"></div>
<div style="left:677.4px;top:502.2px;width:90.5px;height:1px;background:#eef6f6;"></div>
<div style="left:677.4px;top:505.6px;width:68.2px;height:20.0px;box-sizing:border-box;border-top:1px dotted #f0ffff;border-left:1px dotted #f0ffff;border-bottom:1px dotted #101818;border-right:1px dotted #101818;"></div>
<span class="t" style="left:694.25px;top:509.92px;font-size:12px;font-weight:bold;color:#000;-webkit-text-stroke:0.3px #000;letter-spacing:0.828px;">Sho<u>w</u></span>
<svg width="13" height="13" viewBox="0 0 13 13" style="position:absolute;left:751.5px;top:509.29999999999995px"><path d="M1.3 12 L1.3 1 L11.5 6.2" stroke="#f8ffff" stroke-width="1.5" fill="none"/><path d="M1.3 12 L11.5 6.5" stroke="#1a1a1a" stroke-width="1.3" fill="none"/></svg>
<span class="t" style="left:708.25px;top:532.12px;font-size:12px;font-weight:bold;color:#000;-webkit-text-stroke:0.3px #000;letter-spacing:0.453px;"><u>V</u>iew</span>
<div style="left:677.4px;top:549px;width:68.2px;height:20px;box-sizing:border-box;border-top:1px dotted #f0ffff;border-left:1px dotted #f0ffff;border-bottom:1px dotted #101818;border-right:1px dotted #101818;"></div>
<span class="t" style="left:691.25px;top:553.72px;font-size:12px;font-weight:bold;color:#000;-webkit-text-stroke:0.3px #000;letter-spacing:0.362px;">Re<u>p</u>ort</span>
<svg width="13" height="13" viewBox="0 0 13 13" style="position:absolute;left:751.5px;top:553.1px"><path d="M1.3 12 L1.3 1 L11.5 6.2" stroke="#f8ffff" stroke-width="1.5" fill="none"/><path d="M1.3 12 L11.5 6.5" stroke="#1a1a1a" stroke-width="1.3" fill="none"/></svg>
<div style="left:677.4px;top:571.3px;width:68.2px;height:20.0px;box-sizing:border-box;border-top:1px dotted #f0ffff;border-left:1px dotted #f0ffff;border-bottom:1px dotted #101818;border-right:1px dotted #101818;"></div>
<span class="t" style="left:692.25px;top:575.62px;font-size:12px;font-weight:bold;color:#000;-webkit-text-stroke:0.3px #000;letter-spacing:0.494px;"><u>D</u>elete</span>
<svg width="13" height="13" viewBox="0 0 13 13" style="position:absolute;left:751.5px;top:575.0px"><path d="M1.3 12 L1.3 1 L11.5 6.2" stroke="#f8ffff" stroke-width="1.5" fill="none"/><path d="M1.3 12 L11.5 6.5" stroke="#1a1a1a" stroke-width="1.3" fill="none"/></svg>
<div style="left:12px;top:682.5px;width:813px;height:1.2px;background:#e4e4e4;"></div>
<div style="left:13.1px;top:684.3px;width:64.8px;height:55.3px;background:#a9a9a9;box-sizing:border-box;border:1.4px solid #2e2e2e;overflow:hidden;"><div class="fkw"><div class="fk">F1</div><div class="fk">Select Area</div><div class="fk">Reselect</div><div class="fk">Reopen Selection</div></div></div>
<div style="left:79.6px;top:684.3px;width:64.8px;height:55.3px;background:#a9a9a9;box-sizing:border-box;border:1.4px solid #2e2e2e;overflow:hidden;"><div class="fkw"><div class="fk">F2</div><div class="fk">Unselect All</div><div class="fk">Unselect Area</div><div class="fk">Move</div></div></div>
<div style="left:146.3px;top:684.3px;width:64.8px;height:55.3px;background:#a9a9a9;box-sizing:border-box;border:1.4px solid #2e2e2e;overflow:hidden;"><div class="fkw"><div class="fk">F3</div><div class="fk">Cycle Selected</div><div class="fk" style="letter-spacing:0.3px">Copy to Clip/Paste</div><div class="fk">Copy</div></div></div>
<div style="left:212.8px;top:684.3px;width:64.8px;height:55.3px;background:#a9a9a9;box-sizing:border-box;border:1.4px solid #2e2e2e;overflow:hidden;"><div class="fkw"><div class="fk">F4</div><div class="fk">Popup Menu</div><div class="fk">Set Context</div><div class="fk" style="letter-spacing:0.35px">Set Context Up</div></div></div>
<div style="left:279.4px;top:684.3px;width:64.8px;height:55.3px;background:#a9a9a9;box-sizing:border-box;border:1.4px solid #2e2e2e;overflow:hidden;"><div class="fkw"><div class="fk">F5</div><div class="fk">Add Cell</div><div class="fk" style="letter-spacing:0.3px">Add Property Text</div><div class="fk">Rotate −90</div></div></div>
<div style="left:345.8px;top:684.3px;width:64.8px;height:55.3px;background:#a9a9a9;box-sizing:border-box;border:1.4px solid #2e2e2e;overflow:hidden;"><div class="fkw"><div class="fk">F6</div><div class="fk">Peek Area 1</div><div class="fk">Unpeek Area</div><div class="fk">Peek 1</div></div></div>
<div style="left:424.2px;top:684.3px;width:64.8px;height:55.3px;background:#a9a9a9;box-sizing:border-box;border:1.4px solid #2e2e2e;overflow:hidden;"><div class="fkw"><div class="fk">F7</div><div class="fk">Sel/Move Text</div><div class="fk">Sel/Change Text</div><div class="fk">Activate Port</div></div></div>
<div style="left:491px;top:684.3px;width:64.8px;height:55.3px;background:#a9a9a9;box-sizing:border-box;border:1.4px solid #2e2e2e;overflow:hidden;"><div class="fkw"><div class="fk">F8</div><div class="fk">View Area</div><div class="fk">View All</div><div class="fk">Activate Net</div></div></div>
<div style="left:557.6px;top:684.3px;width:64.8px;height:55.3px;background:#a9a9a9;box-sizing:border-box;border:1.4px solid #2e2e2e;overflow:hidden;"><div class="fkw"><div class="fk">F9</div><div class="fk" style="letter-spacing:0.25px">Set Location Mode</div><div class="fk" style="letter-spacing:0.3px">Toggle Autonotch</div><div class="fk">Get Outline</div></div></div>
<div style="left:624.2px;top:684.3px;width:64.8px;height:55.3px;background:#a9a9a9;box-sizing:border-box;border:1.4px solid #2e2e2e;overflow:hidden;"><div class="fkw"><div class="fk">F10</div><div class="fk" style="letter-spacing:0.3px">Pulldown Menu</div><div class="fk">Set IC Layer</div><div class="fk" style="letter-spacing:0.2px">Browse for File</div></div></div>
<div style="left:690.6px;top:684.3px;width:64.8px;height:55.3px;background:#a9a9a9;box-sizing:border-box;border:1.4px solid #2e2e2e;overflow:hidden;"><div class="fkw"><div class="fk">F11</div><div class="fk">Read File</div><div class="fk">Edit File</div><div class="fk">Save Cell</div></div></div>
<div style="left:757.9px;top:684.3px;width:64.8px;height:55.3px;background:#a9a9a9;box-sizing:border-box;border:1.4px solid #2e2e2e;overflow:hidden;"><div class="fkw"><div class="fk">F12</div><div class="fk">Pop Window</div><div class="fk">Close Window</div><div class="fk">&nbsp;</div></div></div>
<span class="t" style="left:415.38px;top:706.25px;font-size:10.5px;font-weight:normal;color:#000;">s</span>
<span class="t" style="left:415.38px;top:717.15px;font-size:10.5px;font-weight:normal;color:#000;">c</span>
<span class="t" style="left:415.08px;top:728.06px;font-size:10.5px;font-weight:normal;color:#000;">a</span>
<div style="left:11.1px;top:740.2px;width:813.9px;height:1.5px;background:#585858;"></div>
<div style="left:13.2px;top:741.7px;width:811.8px;height:1.5px;background:#d8d8d8;"></div>
<span class="t" style="left:53.10px;top:751.12px;font-size:12px;font-weight:bold;color:#000;-webkit-text-stroke:0.3px #000;letter-spacing:0.217px;">[Current DRC] Result 1 of 9 in RuleCheck DRC9_2: Metal2 spacing = 4L</span>
<div style="left:28.2px;top:749.6px;width:4px;height:3.4px;background:#000;"></div>
<div style="left:26.6px;top:755.1px;width:5.6px;height:2.2px;background:#000;"></div>
<div style="left:28.6px;top:755.1px;width:3.6px;height:9px;background:#000;"></div>
<div style="left:26.3px;top:763.4px;width:7.9px;height:2.6px;background:#000;"></div>
<div style="left:162px;top:67px;width:141px;height:234.5px;background:#bdd6d6;box-sizing:border-box;border-top:1.6px solid #eef8f8;border-left:1.6px solid #eef8f8;border-bottom:1.6px solid #566464;border-right:1.6px solid #566464;"></div>
<div style="left:165px;top:76.3px;width:109px;height:19.6px;background:#bdd6d6;box-sizing:border-box;border-top:1.3px solid #f4ffff;border-left:1.3px solid #f4ffff;border-bottom:1.3px solid #4c5858;border-right:1.3px solid #4c5858;"></div>
<span class="t" style="left:174.40px;top:79.77px;font-size:12.1px;font-weight:bold;color:#000;-webkit-text-stroke:0.3px #000;letter-spacing:-0.900px;"><u>A</u>dd</span>
<svg width="13" height="12" viewBox="0 0 13 12" style="position:absolute;left:279px;top:79px"><path d="M1.8 10.8 L11.3 5.6" stroke="#fff" stroke-width="1.9" fill="none"/><path d="M1.8 11 L1.8 1.6 L11.3 5.2" stroke="#000" stroke-width="2.2" fill="none" stroke-linejoin="miter"/></svg>
<span class="t" style="left:174.40px;top:101.97px;font-size:12.1px;font-weight:bold;color:#000;-webkit-text-stroke:0.3px #000;letter-spacing:0.545px;"><u>M</u>ake</span>
<svg width="13" height="12" viewBox="0 0 13 12" style="position:absolute;left:279px;top:101.2px"><path d="M1.8 10.8 L11.3 5.6" stroke="#fff" stroke-width="1.9" fill="none"/><path d="M1.8 11 L1.8 1.6 L11.3 5.2" stroke="#000" stroke-width="2.2" fill="none" stroke-linejoin="miter"/></svg>
<span class="t" style="left:174.40px;top:124.17px;font-size:12.1px;font-weight:bold;color:#000;-webkit-text-stroke:0.3px #000;letter-spacing:-0.332px;"><u>C</u>hange</span>
<svg width="13" height="12" viewBox="0 0 13 12" style="position:absolute;left:279px;top:123.4px"><path d="M1.8 10.8 L11.3 5.6" stroke="#fff" stroke-width="1.9" fill="none"/><path d="M1.8 11 L1.8 1.6 L11.3 5.2" stroke="#000" stroke-width="2.2" fill="none" stroke-linejoin="miter"/></svg>
<span class="t" style="left:174.40px;top:146.17px;font-size:12.1px;font-weight:bold;color:#000;-webkit-text-stroke:0.3px #000;letter-spacing:0.278px;"><u>D</u>elete</span>
<svg width="13" height="12" viewBox="0 0 13 12" style="position:absolute;left:279px;top:145.4px"><path d="M1.8 10.8 L11.3 5.6" stroke="#fff" stroke-width="1.9" fill="none"/><path d="M1.8 11 L1.8 1.6 L11.3 5.2" stroke="#000" stroke-width="2.2" fill="none" stroke-linejoin="miter"/></svg>
<span class="t" style="left:174.40px;top:168.37px;font-size:12.1px;font-weight:bold;color:#000;-webkit-text-stroke:0.3px #000;letter-spacing:-0.053px;">C<u>h</u>eck</span>
<svg width="13" height="12" viewBox="0 0 13 12" style="position:absolute;left:279px;top:167.6px"><path d="M1.8 10.8 L11.3 5.6" stroke="#fff" stroke-width="1.9" fill="none"/><path d="M1.8 11 L1.8 1.6 L11.3 5.2" stroke="#000" stroke-width="2.2" fill="none" stroke-linejoin="miter"/></svg>
<span class="t" style="left:174.40px;top:190.37px;font-size:12.1px;font-weight:bold;color:#6a7878;color:transparent;background-image:repeating-conic-gradient(#000 0 25%,rgba(0,0,0,0.05) 0 50%);background-size:2px 2px;-webkit-background-clip:text;background-clip:text;-webkit-text-stroke:0.2px rgba(0,0,0,0.3);letter-spacing:0.248px;">Place</span>
<svg width="13" height="12" viewBox="0 0 13 12" style="position:absolute;left:279px;top:189.6px"><path d="M1.8 10.8 L11.3 5.6" stroke="#fff" stroke-width="1.9" fill="none"/><path d="M1.8 11 L1.8 1.6 L11.3 5.2" stroke="#7c8c8c" stroke-width="2.2" fill="none" stroke-linejoin="miter"/></svg>
<span class="t" style="left:174.40px;top:212.37px;font-size:12.1px;font-weight:bold;color:#6a7878;color:transparent;background-image:repeating-conic-gradient(#000 0 25%,rgba(0,0,0,0.05) 0 50%);background-size:2px 2px;-webkit-background-clip:text;background-clip:text;-webkit-text-stroke:0.2px rgba(0,0,0,0.3);letter-spacing:0.092px;">Unplace</span>
<span class="t" style="left:174.40px;top:234.47px;font-size:12.1px;font-weight:bold;color:#6a7878;color:transparent;background-image:repeating-conic-gradient(#000 0 25%,rgba(0,0,0,0.05) 0 50%);background-size:2px 2px;-webkit-background-clip:text;background-clip:text;-webkit-text-stroke:0.2px rgba(0,0,0,0.3);letter-spacing:0.179px;">Replace Cell:</span>
<span class="t" style="left:174.40px;top:256.47px;font-size:12.1px;font-weight:bold;color:#6a7878;color:transparent;background-image:repeating-conic-gradient(#000 0 25%,rgba(0,0,0,0.05) 0 50%);background-size:2px 2px;-webkit-background-clip:text;background-clip:text;-webkit-text-stroke:0.2px rgba(0,0,0,0.3);letter-spacing:0.297px;">Regen Device</span>
<span class="t" style="left:174.40px;top:278.37px;font-size:12.1px;font-weight:bold;color:#000;-webkit-text-stroke:0.3px #000;letter-spacing:0.146px;">Compo<u>s</u>e Layer</span>
<svg width="13" height="12" viewBox="0 0 13 12" style="position:absolute;left:279px;top:277.6px"><path d="M1.8 10.8 L11.3 5.6" stroke="#fff" stroke-width="1.9" fill="none"/><path d="M1.8 11 L1.8 1.6 L11.3 5.2" stroke="#000" stroke-width="2.2" fill="none" stroke-linejoin="miter"/></svg>
<div style="left:296.4px;top:76px;width:114.8px;height:354px;background:#bdd6d6;box-sizing:border-box;border-top:1.6px solid #eef8f8;border-left:1.6px solid #eef8f8;border-bottom:1.6px solid #566464;border-right:1.6px solid #566464;"></div>
<div style="left:303.7px;top:85px;width:99.5px;height:19.5px;background:#bdd6d6;box-sizing:border-box;border-top:1.3px solid #f4ffff;border-left:1.3px solid #f4ffff;border-bottom:1.3px solid #4c5858;border-right:1.3px solid #4c5858;"></div>
<span class="t" style="left:308.10px;top:89.57px;font-size:12.3px;font-weight:bold;color:#000;-webkit-text-stroke:0.3px #000;"><u>S</u>hape:</span>
<span class="t" style="left:308.10px;top:111.27px;font-size:12.3px;font-weight:bold;color:#000;-webkit-text-stroke:0.3px #000;letter-spacing:-0.037px;"><u>P</u>ath:</span>
<span class="t" style="left:308.10px;top:133.27px;font-size:12.3px;font-weight:bold;color:#000;-webkit-text-stroke:0.3px #000;letter-spacing:0.529px;">Te<u>x</u>t:</span>
<span class="t" style="left:308.10px;top:155.27px;font-size:12.3px;font-weight:bold;color:#000;-webkit-text-stroke:0.3px #000;letter-spacing:0.352px;">M<u>u</u>lti Text:</span>
<span class="t" style="left:308.10px;top:177.37px;font-size:12.3px;font-weight:bold;color:#000;-webkit-text-stroke:0.3px #000;letter-spacing:0.177px;">P<u>r</u>operty:</span>
<span class="t" style="left:308.10px;top:199.47px;font-size:12.3px;font-weight:bold;color:#000;-webkit-text-stroke:0.3px #000;letter-spacing:0.355px;">Property <u>T</u>ext:</span>
<span class="t" style="left:308.10px;top:221.47px;font-size:12.3px;font-weight:bold;color:#000;-webkit-text-stroke:0.3px #000;letter-spacing:-0.518px;"><u>C</u>ell:</span>
<span class="t" style="left:308.10px;top:243.57px;font-size:12.3px;font-weight:bold;color:#000;-webkit-text-stroke:0.3px #000;letter-spacing:0.139px;"><u>D</u>evice:</span>
<span class="t" style="left:308.10px;top:265.27px;font-size:12.3px;font-weight:bold;color:#000;-webkit-text-stroke:0.3px #000;letter-spacing:-0.081px;"><u>V</u>ia:</span>
<span class="t" style="left:308.10px;top:287.27px;font-size:12.3px;font-weight:bold;color:#000;-webkit-text-stroke:0.3px #000;letter-spacing:-0.171px;">Rout<u>e</u>:</span>
<span class="t" style="left:308.10px;top:314.07px;font-size:12.3px;font-weight:bold;color:#000;-webkit-text-stroke:0.3px #000;letter-spacing:0.423px;"><u>O</u>verflow</span>
<span class="t" style="left:308.10px;top:336.17px;font-size:12.3px;font-weight:bold;color:#000;-webkit-text-stroke:0.3px #000;letter-spacing:0.169px;">Ro<u>w</u>:</span>
<span class="t" style="left:308.10px;top:358.27px;font-size:12.3px;font-weight:bold;color:#000;-webkit-text-stroke:0.3px #000;letter-spacing:0.345px;">Rows <u>B</u>y Area:</span>
<span class="t" style="left:308.10px;top:385.17px;font-size:12.3px;font-weight:bold;color:#000;-webkit-text-stroke:0.3px #000;letter-spacing:-0.264px;">Pa<u>n</u>el:</span>
<span class="t" style="left:308.10px;top:407.27px;font-size:12.3px;font-weight:bold;color:#000;-webkit-text-stroke:0.3px #000;letter-spacing:-0.192px;">Ru<u>l</u>er:</span>
<svg width="13" height="12" viewBox="0 0 13 12" style="position:absolute;left:386px;top:264.6px"><path d="M1.8 10.8 L11.3 5.6" stroke="#fff" stroke-width="1.9" fill="none"/><path d="M1.8 11 L1.8 1.6 L11.3 5.2" stroke="#000" stroke-width="2.2" fill="none" stroke-linejoin="miter"/></svg>
<div style="left:303px;top:306.09999999999997px;width:100.7px;height:1.2px;background:#101010;"></div>
<div style="left:303px;top:307.3px;width:100.7px;height:1.2px;background:#f0fafa;"></div>
<div style="left:303px;top:376.7px;width:100.7px;height:1.2px;background:#101010;"></div>
<div style="left:303px;top:377.90000000000003px;width:100.7px;height:1.2px;background:#f0fafa;"></div>
<div style="left:410.6px;top:83px;width:7.3px;height:18px;background:#585858;"></div>
<div style="left:410.6px;top:101px;width:7.3px;height:25px;background:#3c6e6e;"></div>
<div style="left:411.2px;top:126px;width:1.3px;height:304px;background:#485858;"></div>
<svg width="61.4" height="28.0" style="position:absolute;left:165.4px;top:43.0px;overflow:visible"><ellipse cx="30.7" cy="14.0" rx="27.7" ry="11.0" fill="none" stroke="#e23a3a" stroke-width="1.3"/></svg>
<svg width="76" height="28.4" style="position:absolute;left:161px;top:71.1px;overflow:visible"><ellipse cx="38" cy="14.2" rx="35" ry="11.2" fill="none" stroke="#e23a3a" stroke-width="1.3"/></svg>
<svg width="87.6" height="30.8" style="position:absolute;left:293.0px;top:80.6px;overflow:visible"><ellipse cx="43.8" cy="15.4" rx="40.8" ry="12.4" fill="none" stroke="#e23a3a" stroke-width="1.3"/></svg>
</body></html>
